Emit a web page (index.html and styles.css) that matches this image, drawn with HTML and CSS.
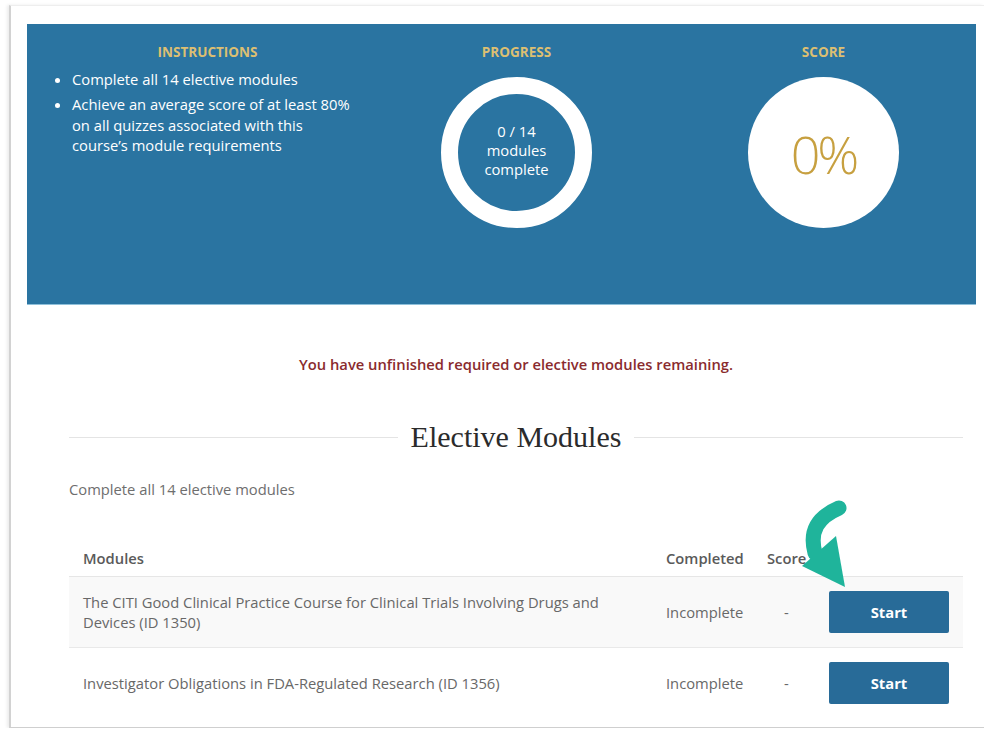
FILE: index.html
```html
<!DOCTYPE html>
<html lang="en">
<head>
<meta charset="utf-8">
<title>Course Progress</title>
<link rel="stylesheet" href="styles.css">
</head>
<body>
<div class="frame">
  <section class="summary">
    <div class="col">
      <h3 class="label">Instructions</h3>
      <ul class="rules">
        <li>Complete all 14 elective modules</li>
        <li>Achieve an average score of at least 80% on all quizzes associated with this course’s module requirements</li>
      </ul>
    </div>
    <div class="col center">
      <h3 class="label">Progress</h3>
      <div class="ring">
        <span>0 / 14</span>
        <span>modules</span>
        <span>complete</span>
      </div>
    </div>
    <div class="col center">
      <h3 class="label">Score</h3>
      <div class="disc">0%</div>
    </div>
  </section>

  <main class="content">
    <p class="alert">You have unfinished required or elective modules remaining.</p>
    <h2 class="section-title"><span>Elective Modules</span></h2>
    <p class="note">Complete all 14 elective modules</p>

    <table class="modules">
      <thead>
        <tr>
          <th class="c-name">Modules</th>
          <th class="c-done">Completed</th>
          <th class="c-score">Score</th>
          <th class="c-act"></th>
        </tr>
      </thead>
      <tbody>
        <tr class="odd">
          <td>The CITI Good Clinical Practice Course for Clinical Trials Involving Drugs and Devices (ID 1350)</td>
          <td>Incomplete</td>
          <td class="dash">-</td>
          <td><button class="start">Start</button></td>
        </tr>
        <tr>
          <td>Investigator Obligations in FDA-Regulated Research (ID 1356)</td>
          <td>Incomplete</td>
          <td class="dash">-</td>
          <td><button class="start">Start</button></td>
        </tr>
      </tbody>
    </table>
  </main>

  <!-- curved pointer towards the first Start button -->
  <svg class="pointer" width="110" height="100" viewBox="0 0 110 100" aria-hidden="true">
    <path d="M59 13 C 38 22, 29 36, 35 58" fill="none" stroke="#1fb49b" stroke-width="15" stroke-linecap="round"/>
    <polygon points="22,71 56,41 65,92" fill="#1fb49b"/>
  </svg>
</div>
</body>
</html>
```

FILE: styles.css
```css
html, body {
  margin: 0;
  padding: 0;
  background: #ffffff;
}

body {
  font-family: "Open Sans", "Liberation Sans", sans-serif;
  font-size: 14.75px;
  color: #666;
}

.frame {
  position: relative;
  box-sizing: border-box;
  margin: 5px 0 0 9px;
  height: 723px;
  padding: 18px 8px 0 16px;
  border-left: 2px solid #d2d2d2;
  border-top: 1px solid #eeeeee;
  border-bottom: 1px solid #cfcfcf;
  box-shadow: -2px 0 3px rgba(0, 0, 0, 0.08);
  overflow: hidden;
}

/* blue summary band */
.summary {
  display: grid;
  grid-template-columns: 309px 309px 1fr;
  height: 281px;
  box-sizing: border-box;
  padding: 20px 0 0 26px;
  background: #2a74a1;
  border-bottom: 1px solid #8fc0da;
  color: #fff;
}

.col {
  display: flex;
  flex-direction: column;
}

.col.center {
  align-items: center;
}

.label {
  margin: 0;
  text-align: center;
  font-size: 13.5px;
  line-height: 16px;
  font-weight: 700;
  text-transform: uppercase;
  color: #dcbf72;
}

.rules {
  margin: 9px 0 0;
  padding-left: 19px;
  width: 288px;
  font-size: 14.75px;
  line-height: 20.5px;
}

.rules li {
  margin-bottom: 4.5px;
}

.ring {
  margin-top: 17px;
  width: 151px;
  height: 151px;
  box-sizing: border-box;
  border: 17px solid #fff;
  border-radius: 50%;
  display: flex;
  flex-direction: column;
  align-items: center;
  justify-content: center;
  font-size: 14.75px;
  line-height: 19px;
  font-weight: 400;
  padding-bottom: 4px;
}

.disc {
  margin-top: 17px;
  width: 151px;
  height: 151px;
  border-radius: 50%;
  background: #fff;
  display: flex;
  align-items: center;
  justify-content: center;
  color: #c7a040;
  font-size: 52px;
  font-weight: 300;
  letter-spacing: -3px;
  padding-top: 2px;
  box-sizing: border-box;
}

/* lower content */
.content {
  margin: 0 13px 0 42px;
}

.alert {
  margin: 49px 0 0;
  text-align: center;
  color: #8a2b2e;
  font-weight: 600;
  line-height: 20px;
}

.section-title {
  margin: 45px 0 0;
  display: flex;
  align-items: center;
  gap: 13px;
  font-family: "Liberation Serif", "DejaVu Serif", serif;
  font-weight: 400;
  font-size: 30px;
  line-height: 36px;
  color: #2b2b2b;
}

.section-title::before,
.section-title::after {
  content: "";
  flex: 1;
  height: 1px;
  background: #e4e4e4;
}

.note {
  margin: 24px 0 0;
  line-height: 20px;
  color: #6e6e6e;
}

.modules {
  margin-top: 39px;
  width: 894px;
  border-collapse: collapse;
  table-layout: fixed;
}

.modules th {
  text-align: left;
  font-weight: 600;
  color: #5a5a5a;
  line-height: 20px;
  padding: 10px 14px 8px;
  border-bottom: 1px solid #e6e6e6;
}

.c-done { width: 73px; }
.c-score { width: 34px; }
.c-act { width: 120px; }

.modules td {
  padding: 14px 14px;
  line-height: 20px;
  color: #686868;
  vertical-align: middle;
  border-bottom: 1px solid #e9e9e9;
}

.modules tr:last-child td {
  border-bottom: none;
}

.modules tr.odd td {
  background: #f9f9f9;
}

.dash {
  text-align: left;
  padding-left: 31px !important;
  color: #888;
}

.start {
  display: block;
  width: 120px;
  height: 42px;
  border: none;
  border-radius: 2px;
  background: #286b98;
  color: #fff;
  font-family: "Open Sans", "Liberation Sans", sans-serif;
  font-size: 14.75px;
  font-weight: 700;
  cursor: pointer;
}

.pointer {
  position: absolute;
  left: 769px;
  top: 489px;
}
```
